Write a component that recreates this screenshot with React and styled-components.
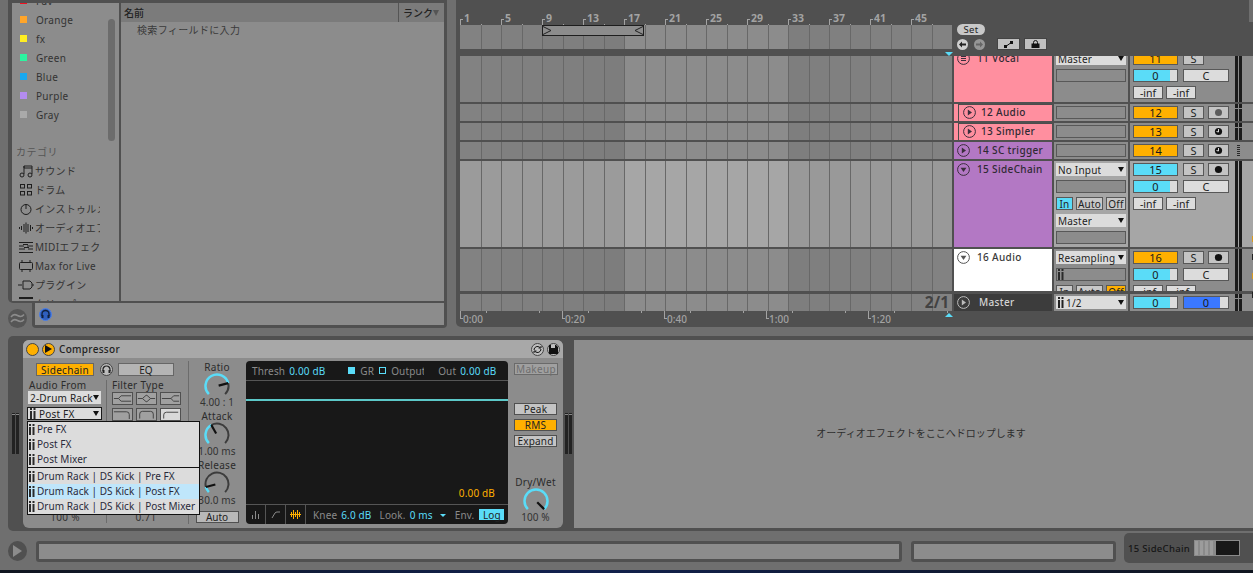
import React from "react";
import styled, { createGlobalStyle } from "styled-components";

const C = {
  bg: "#6f6f6f", frame: "#505050", panel: "#8c8c8c", sel: "#a6a6a6", light: "#dcdcdc",
  orange: "#ffb000", cyan: "#5adcf8", ink: "#1c1c1c", line: "#666666",
};

const Global = createGlobalStyle`
  html, body { margin: 0; padding: 0; background: ${C.bg}; }
  * { box-sizing: border-box; }
  body { font-family: "Noto Sans", "Noto Sans CJK JP", sans-serif; font-size: 10px; color: ${C.ink}; }
`;

const Page = styled.div`width:1253px;height:573px;overflow:hidden;display:flex;flex-direction:column;`;
const Top = styled.div`display:flex;height:327px;padding-left:8px;gap:9px;`;

/* ---------- Browser ---------- */
const Browser = styled.div`width:439px;display:flex;flex-direction:column;`;
const BrowserMain = styled.div`height:303px;background:${C.frame};padding:3px 3px 2px 4px;display:grid;grid-template-columns:107px 323px;column-gap:2px;border-radius:0 0 0 5px;`;
const Sidebar = styled.div`background:${C.panel};overflow:hidden;position:relative;`;
const SideList = styled.div`margin-top:-12px;`;
const SideRow = styled.div`height:19px;display:flex;align-items:center;padding-left:${p => p.$pad || 8}px;width:88px;overflow:hidden;white-space:nowrap;font-size:10px;letter-spacing:.3px;color:#333;`;
const Swatch = styled.span`width:7px;height:7px;background:${p => p.$c};margin-right:9px;flex:none;`;
const IconSlot = styled.span`width:16px;height:14px;margin-right:1px;flex:none;display:flex;`;
const Heading = styled.div`height:19px;margin-top:18px;padding-left:4px;display:flex;align-items:center;color:#555;font-size:10px;letter-spacing:.5px;`;
const Thumb = styled.div`position:absolute;left:96px;top:16px;width:7px;height:122px;border-radius:4px;background:#6c6c6c;`;
const Results = styled.div`background:${C.panel};`;
const ResultHead = styled.div`height:19px;background:#7b7b7b;display:flex;align-items:center;justify-content:space-between;font-size:10px;font-weight:500;color:#222;`;
const NameCol = styled.span`padding-left:3px;`;
const RankCol = styled.span`width:46px;height:100%;border-left:1px solid #555;display:flex;align-items:center;padding-left:4px;gap:0;`;
const HeadTri = styled.span`width:0;height:0;border:3.5px solid transparent;border-top:6px solid #555;border-bottom:0;`;
const Placeholder = styled.div`padding:0 0 0 16px;color:#3a3a3a;font-size:10px;letter-spacing:.35px;line-height:17px;`;
const BrowserFoot = styled.div`flex:1;display:flex;`;
const WaveSlot = styled.div`width:24px;display:flex;align-items:flex-start;padding:6px 0 0 0;`;
const WaveCircle = styled.div`width:19px;height:19px;border-radius:50%;background:#565656;display:flex;align-items:center;justify-content:center;`;
const FootBar = styled.div`flex:1;background:${C.frame};padding:0 3px 3px 3px;border-radius:0 0 4px 4px;display:flex;`;
const FootInner = styled.div`flex:1;background:${C.panel};display:flex;align-items:center;padding-left:4px;`;

/* ---------- Arrangement ---------- */
const Arr = styled.div`flex:1;background:${C.frame};border-radius:0 0 0 5px;position:relative;padding-left:4px;display:flex;flex-direction:column;`;
const ArrTop = styled.div`display:grid;grid-template-columns:492px 1fr;height:49px;margin-bottom:7px;`;
const Ruler = styled.div`height:25px;display:grid;grid-template-columns:repeat(12,1fr);position:relative;`;
const Bar = styled.div`position:relative;height:25px;color:#a3a3a3;font-weight:700;font-size:10.5px;padding:12px 0 0 4px;line-height:13px;&::before{content:"";position:absolute;left:0;bottom:0;height:5px;border-left:1px solid #a3a3a3;border-top:1px solid #a3a3a3;width:2px;}&::after{content:"";position:absolute;left:50%;bottom:0;height:1px;width:1px;background:#a3a3a3;}`;
const OverWrap = styled.div`position:relative;height:24px;`;
const LaneGrid = styled.div`display:grid;grid-template-columns:repeat(24,1fr);height:100%;`;
const Lane = styled.div`background:${p => p.$c};border-left:1px solid #686868;&:first-child{border-left:0;}`;
const Brace = styled.div`position:absolute;left:82px;top:0;width:102px;height:11px;background:${C.panel};border:1px solid #1e1e1e;display:flex;justify-content:space-between;align-items:center;`;
const SetArea = styled.div`padding:24px 0 0 5px;display:flex;flex-direction:column;gap:3px;`;
const SetPill = styled.div`width:28px;height:11px;border-radius:6px;background:#c8c8c8;color:#222;font-size:9.5px;line-height:11px;text-align:center;letter-spacing:.3px;`;
const SetRow = styled.div`display:flex;align-items:center;height:12px;`;
const ArrowBtn = styled.div`width:11px;height:11px;border-radius:50%;background:${p => p.$on ? "#cfcfcf" : "#969696"};margin-right:6px;display:flex;align-items:center;justify-content:center;`;
const SmallBtn = styled.div`width:23px;height:12px;background:#c0c0c0;border:1px solid #444;margin-left:${p => p.$ml || 0}px;display:flex;align-items:center;justify-content:center;`;

const TrackClip = styled.div`height:235px;overflow:hidden;margin-bottom:3px;`;
const Row = styled.div`display:grid;grid-template-columns:492px 98px 74px 123px;column-gap:2px;height:${p => p.$h}px;margin-top:${p => p.$mt || 0}px;margin-bottom:2px;overflow:hidden;`;
const Head = styled.div`background:${p => p.$bg};position:relative;display:flex;align-items:flex-start;padding:${p => p.$pt ?? 2}px 0 0 ${p => p.$pl}px;color:${p => p.$fg || "#2f2a33"};font-size:10px;font-weight:500;letter-spacing:.35px;line-height:13px;`;
const Nested = styled.div`position:absolute;left:4px;top:0;right:0;bottom:0;border-left:1px solid #4c4c4c;border-top:1px solid #4c4c4c;`;
const HeadName = styled.span`position:relative;margin-left:${p => p.$ml}px;white-space:nowrap;`;
const FoldSlot = styled.span`position:relative;width:13px;height:13px;flex:none;`;
const IOCol = styled.div`background:${p => p.$bg || C.panel};padding:${p => p.$pt ?? 2}px 2px 0 2px;display:flex;flex-direction:column;gap:4px;`;
const Sel = styled.div`height:13px;flex:none;background:${C.light};color:#222;display:flex;align-items:center;padding:0 2px;justify-content:space-between;font-size:10px;letter-spacing:.2px;white-space:nowrap;border:${p => p.$framed ? "1px solid #1a1a1a" : "0"};`;
const SelLabel = styled.span`display:flex;align-items:center;gap:2px;overflow:hidden;`;
const SelInset = styled.span`margin-left:1px;`;
const SelTri = styled.span`flex:none;width:0;height:0;border:3.5px solid transparent;border-top:5px solid #111;border-bottom:0;`;
const Field = styled.div`height:13px;flex:none;background:#8c8c8c;border:1px solid #585858;display:flex;align-items:center;padding-left:1px;`;
const MonRow = styled.div`display:flex;gap:3px;height:13px;flex:none;`;
const Mon = styled.div`width:${p => p.$w}px;background:${p => p.$on || "#c8c8c8"};border:1px solid #585858;display:flex;align-items:center;justify-content:center;font-size:10px;letter-spacing:.2px;color:#222;`;
const MixCol = styled.div`background:${p => p.$bg || C.panel};display:flex;padding-left:3px;position:relative;`;
const MixRows = styled.div`width:96px;padding-top:${p => p.$pt ?? 2}px;display:flex;flex-direction:column;gap:4px;`;
const MixLine = styled.div`display:flex;height:13px;flex:none;`;
const Activator = styled.div`width:45px;background:${p => p.$c};border:1px solid #585858;display:flex;align-items:center;justify-content:center;font-size:11px;color:#1a1a1a;`;
const Slider = styled.div`width:${p => p.$w || 45}px;margin-left:${p => p.$ml || 0}px;border:1px solid #585858;display:flex;align-items:center;justify-content:center;font-size:11px;color:#1a1a1a;background:linear-gradient(90deg,${p => p.$c} ${p => p.$f}%,${C.light} ${p => p.$f}%);`;
const Tog = styled.div`width:21px;margin-left:${p => p.$ml}px;background:#c4c4c4;border:1px solid #585858;display:flex;align-items:center;justify-content:center;font-size:11px;color:#222;`;
const Pan = styled.div`width:46px;margin-left:5px;background:${C.light};border:1px solid #585858;display:flex;align-items:center;justify-content:center;font-size:11px;color:#222;`;
const Peak = styled.div`width:30px;margin-right:3px;background:${C.light};border:1px solid #585858;display:flex;align-items:center;justify-content:center;font-size:10.5px;color:#222;`;
const Meter = styled.div`margin:${p => p.$short ? "1px" : "0"} 0 0 ${p => p.$ml ?? 6}px;width:8px;display:flex;gap:1px;`;
const MeterStrip = styled.div`width:3px;display:flex;flex-direction:column;gap:1px;`;
const Seg = styled.div`background:#1b1b1b;flex:${p => p.$f};`;
const Dots = styled.div`margin:3px 0 3px 8px;width:3px;background:repeating-linear-gradient(180deg,#2a2a2a 0 1px,transparent 1px 2px);`;

const TimeRuler = styled.div`height:16px;display:grid;grid-template-columns:repeat(5,102px);position:relative;`;
const TimeCell = styled.div`position:relative;color:#a3a3a3;font-size:10px;font-weight:500;padding:1px 0 0 3px;line-height:14px;&::before{content:"";position:absolute;left:0;top:0;height:7px;border-left:1px solid #a3a3a3;border-bottom:1px solid #a3a3a3;width:2px;}&::after{content:"";position:absolute;left:25%;top:0;height:2px;width:51%;border-left:1px solid #a3a3a3;border-right:1px solid #a3a3a3;}`;
const MasterRow = styled(Row)`margin-bottom:0;`;
const MasterLaneWrap = styled.div`position:relative;`;
const Sig = styled.div`position:absolute;right:3px;top:0;height:17px;font-size:15.5px;font-weight:700;color:#424242;line-height:17px;`;
const TriMark = styled.div`position:absolute;left:489px;top:${p => p.$top}px;width:0;height:0;border:4px solid transparent;${p => p.$up ? `border-bottom:4px solid ${C.cyan};border-top:0;` : `border-top:4px solid ${C.cyan};border-bottom:0;`}`;
const ScrollEdge = styled.div`position:absolute;right:0;top:0;width:4px;height:22px;background:#6e6e6e;`;
const EdgeDot = styled.div`position:absolute;right:0;top:${p => p.$top}px;width:1px;height:6px;background:${p => p.$c};`;

/* ---------- Device strip ---------- */
const DeviceStrip = styled.div`margin:9px 0 0 8px;height:195px;background:${C.frame};border-radius:5px 0 0 5px;padding:4px 0 3px 0;display:flex;`;
const Grip = styled.div`width:${p => p.$w}px;display:flex;padding-left:${p => p.$pl}px;align-items:center;`;
const GripBars = styled.div`width:7px;height:41px;display:flex;gap:1px;margin-top:${p => p.$mt || 0}px;`;
const GripBar = styled.div`width:3px;background:linear-gradient(180deg,#222 0 1px,#888 1px 2px,#222 2px);`;
const Device = styled.div`width:540px;background:${C.panel};border-radius:6px 6px 6px 6px;overflow:visible;display:flex;flex-direction:column;`;
const DevTitle = styled.div`height:18px;background:#a8a8a8;border-radius:6px 6px 0 0;display:flex;align-items:center;padding:0 3px 0 3px;`;
const DevName = styled.span`font-size:10px;font-weight:500;letter-spacing:.3px;color:#222;margin-left:4px;flex:1;`;
const TitleDot = styled.span`width:13px;height:13px;border-radius:50%;background:${p => p.$c};border:1px solid #444;margin-right:${p => p.$mr || 0}px;display:flex;align-items:center;justify-content:center;`;
const DevBody = styled.div`flex:1;display:flex;min-height:0;`;
const SideChain = styled.div`width:165px;position:relative;display:flex;flex-direction:column;padding-top:5px;`;
const ScTop = styled.div`display:flex;align-items:center;padding-left:13px;height:13px;`;
const ScBtn = styled.div`width:58px;height:13px;background:${C.orange};border:1px solid #666;display:flex;align-items:center;justify-content:center;font-size:10px;letter-spacing:.3px;color:#222;`;
const Phones = styled.div`width:13px;height:13px;margin-left:6px;border-radius:50%;background:#bcbcbc;border:1px solid #444;display:flex;align-items:center;justify-content:center;`;
const EqBtn = styled.div`width:56px;height:13px;margin-left:5px;background:#b4b4b4;border:1px solid #666;display:flex;align-items:center;justify-content:center;font-size:10px;color:#222;`;
const ScCols = styled.div`flex:1;display:grid;grid-template-columns:83px 82px;padding:4px 0 5px;`;
const ScCol = styled.div`display:flex;flex-direction:column;padding-left:${p => p.$pl}px;border-left:${p => p.$sep ? "1px solid #6c6c6c" : "0"};`;
const ScLabel = styled.div`font-size:10px;letter-spacing:.3px;color:#2b2b2b;line-height:11px;height:11px;white-space:nowrap;`;
const ScSel = styled(Sel)`width:${p => p.$w}px;margin:${p => p.$m};`;
const ScValue = styled.div`margin-top:auto;text-align:center;width:${p => p.$w}px;font-size:10px;letter-spacing:.3px;color:#333;line-height:11px;`;
const FilterGrid = styled.div`display:grid;grid-template-columns:repeat(3,21px);column-gap:3px;row-gap:3px;margin-top:1px;`;
const FilterBtn = styled.div`height:13px;background:${p => p.$on ? "#d8d8d8" : "#a0a0a0"};border:1px solid #505050;display:flex;`;
const Menu = styled.div`position:absolute;left:4px;top:63px;width:173px;height:94px;background:${C.light};border:1px solid #111;z-index:5;`;
const MenuSep = styled.div`height:1px;background:#111;margin-bottom:1px;`;
const MenuItem = styled.div`height:15px;display:flex;align-items:center;padding:0 0 1px 1px;gap:2px;font-size:10px;letter-spacing:.04px;white-space:nowrap;color:#2a2a3a;background:${p => p.$hi ? "#bfe6fb" : "transparent"};`;
const KnobCol = styled.div`width:58px;position:relative;display:flex;flex-direction:column;align-items:center;padding:4px 0 0 0;gap:2px;&::before{content:"";position:absolute;left:0;top:3px;bottom:4px;width:1px;background:#6c6c6c;}`;
const KnobUnit = styled.div`display:flex;flex-direction:column;align-items:center;height:47px;`;
const KLabel = styled.div`font-size:10px;letter-spacing:.3px;line-height:11px;height:11px;color:#2b2b2b;white-space:nowrap;`;
const KValue = styled.div`font-size:10px;letter-spacing:.1px;line-height:11px;margin-top:-2px;color:#333;white-space:nowrap;`;
const AutoBtn = styled.div`width:43px;height:12px;margin-top:2px;background:#b8b8b8;border:1px solid #505050;display:flex;align-items:center;justify-content:center;font-size:10px;color:#222;`;
const Display = styled.div`width:262px;height:163px;margin-top:3px;background:#181818;border-radius:4px;display:flex;flex-direction:column;color:#8a8a8a;font-size:10px;letter-spacing:.15px;`;
const DHead = styled.div`height:20px;border-bottom:1px solid #555;display:flex;align-items:center;padding-left:6px;white-space:nowrap;`;
const CyanVal = styled.span`color:${C.cyan};margin-left:${p => p.$ml ?? 4}px;`;
const Gap = styled.span`margin-left:${p => p.$ml}px;display:flex;align-items:center;`;
const Check = styled.span`width:7px;height:7px;border:1px solid ${C.cyan};background:${p => p.$on ? C.cyan : "transparent"};margin-right:5px;display:inline-block;`;
const ClipOut = styled.span`width:33px;overflow:hidden;display:inline-block;`;
const Plot = styled.div`flex:1;display:flex;flex-direction:column;min-height:0;`;
const Teal = styled.div`height:2px;margin-top:18px;background:#5cc8c8;`;
const GrVal = styled.div`margin:auto 13px 4px auto;color:${C.orange};`;
const DFoot = styled.div`height:20px;border-top:1px solid #555;display:flex;align-items:center;white-space:nowrap;`;
const FootCell = styled.div`width:20px;height:100%;border-right:1px solid #555;display:flex;align-items:center;justify-content:center;`;
const LogBtn = styled.span`width:25px;height:11px;margin-left:5px;background:${C.cyan};color:#222;display:flex;align-items:center;justify-content:center;`;
const SmallTri = styled.span`width:0;height:0;border:3px solid transparent;border-top:3px solid ${C.cyan};border-bottom:0;margin:2px 0 0 7px;`;
const RightCol = styled.div`flex:1;display:flex;flex-direction:column;padding:5px 0 5px 6px;`;
const Makeup = styled.div`width:44px;height:12px;background:#a0a0a0;border:1px solid #6a6a6a;display:flex;align-items:center;justify-content:center;font-size:10px;letter-spacing:.3px;color:#6e6e6e;`;
const ModeStack = styled.div`margin-top:28px;display:flex;flex-direction:column;gap:4px;`;
const ModeBtn = styled.div`width:43px;height:12px;background:${p => p.$on ? C.orange : "#c4c4c4"};border:1px solid #505050;display:flex;align-items:center;justify-content:center;font-size:10px;letter-spacing:.2px;color:#222;`;
const WetUnit = styled.div`margin-top:auto;width:43px;display:flex;flex-direction:column;align-items:center;`;
const Drop = styled.div`flex:1;background:${C.panel};display:flex;align-items:center;justify-content:center;padding:0 0 4px 15px;color:#2e2e2e;font-size:10px;letter-spacing:0;`;

/* ---------- Footer ---------- */
const Footer = styled.div`height:39px;display:flex;align-items:flex-start;padding-left:8px;`;
const PlayRound = styled.div`width:19px;height:20px;margin-top:10px;border-radius:50%;background:#505050;display:flex;align-items:center;justify-content:center;`;
const Status = styled.div`width:${p => p.$w}px;height:21px;margin:10px 0 0 ${p => p.$ml}px;background:${C.panel};border:3px solid #505050;border-radius:3px;`;
const Tab = styled.div`width:129px;height:30px;margin:2px 0 0 8px;background:#505050;border-radius:5px 0 0 5px;display:flex;align-items:center;padding-left:4px;color:#161616;font-size:9.5px;font-weight:500;letter-spacing:.3px;white-space:nowrap;`;
const Thumbnail = styled.div`width:46px;height:16px;margin-left:4px;background:#8a8a8a;display:flex;padding:1px;flex:none;`;
const ThumbSide = styled.div`width:19px;background:repeating-linear-gradient(90deg,#9c9c9c 0 3px,#8a8a8a 3px 5px);`;
const ThumbDisp = styled.div`flex:1;margin-left:2px;background:#181818;`;
const Taskbar = styled.div`height:3px;flex:none;background:linear-gradient(90deg,#10151f,#11214e 45%,#10151f);`;

/* ---------- Drawings ---------- */
const Ico = ({ children, w = 16, h = 14 }) => <svg width={w} height={h} viewBox={`0 0 ${w} ${h}`} fill="none" stroke="#1e1e1e" strokeWidth="1">{children}</svg>;
const icons = {
  note: <Ico><path d="M6 10V2h8v8M6 2v2h8" /><circle cx="4" cy="11" r="2" /><circle cx="12" cy="11" r="2" /></Ico>,
  drum: <Ico><rect x="2.5" y="1.5" width="4" height="3.5" /><rect x="9.5" y="1.5" width="4" height="3.5" /><rect x="2.5" y="8.5" width="4" height="3.5" /><rect x="9.5" y="8.5" width="4" height="3.5" /></Ico>,
  power: <Ico><circle cx="8" cy="7.5" r="5" /><path d="M8 2v5" /></Ico>,
  wave: <Ico><path d="M1.5 6v2M3.5 5v4M6 3v8M8 1.5v11M10 3v8M12.5 4v6M14.5 6v2" /></Ico>,
  midi: <Ico><path d="M1 2.5h14M1 12.5h14M1 6h5M9 6h6M1 9h6M10 9h5M5 4.5h5M6 7.5h5" /></Ico>,
  max: <Ico><rect x="1.5" y="3.5" width="13" height="7" rx="1" /><path d="M4 1v2.5M12 1v2.5M4 10.5V13M12 10.5V13" /></Ico>,
  plug: <Ico><path d="M0 7h4M5 3h7l2 2v4l-2 2H5zM14 7h2" /></Ico>,
  box: <Ico><path d="M1 1h14" strokeWidth="2" /></Ico>,
};
const Fold = ({ kind, c = "#3a2f3c" }) => (
  <svg width="13" height="13" viewBox="0 0 13 13" fill="none">
    <circle cx="6.5" cy="6.5" r="5.9" stroke={c} strokeWidth="1" />
    {kind === "right" && <path d="M4.8 3.6 9 6.5 4.8 9.4z" fill={c} />}
    {kind === "down" && <path d="M3.6 4.8h5.8L6.5 9z" fill={c} />}
    {kind === "lines" && <path d="M4 4.5h5M4 6.5h5M4 8.5h5" stroke={c} />}
  </svg>
);
const IISvg = styled.svg`flex:none;`;
const II = ({ c = "#2a2a2a", h = 11 }) => (
  <IISvg width="6" height={h} viewBox={`0 0 6 ${h}`}>
    <rect x="0" y="0" width="2" height="2" fill={c} /><rect x="0" y="3" width="2" height={h - 3} fill={c} />
    <rect x="3.5" y="0" width="2" height="2" fill={c} /><rect x="3.5" y="3" width="2" height={h - 3} fill={c} />
  </IISvg>
);
const Arm = ({ kind }) => (
  <svg width="11" height="11" viewBox="0 0 11 11">
    {kind === "off" && <circle cx="5.5" cy="5.5" r="3.5" fill="#5c5c5c" />}
    {kind === "on" && <circle cx="5.5" cy="5.5" r="3.6" fill="#111" />}
    {kind === "midi" && <><circle cx="5.5" cy="5.5" r="3.6" fill="#111" /><path d="M5.5 3v3L3.5 5.5" stroke="#ddd" strokeWidth="1" fill="none" /></>}
  </svg>
);
const KnobSvg = styled.svg`flex:none;`;
const Knob = ({ frac }) => {
  const cx = 13, cy = 13, r = 11.5;
  const pt = a => { const t = (a - 90) * Math.PI / 180; return [cx + r * Math.cos(t), cy + r * Math.sin(t)]; };
  const a0 = -135, a1 = 135, av = a0 + frac * 270;
  const arc = (s, e) => { const [x0, y0] = pt(s), [x1, y1] = pt(e); return `M${x0} ${y0}A${r} ${r} 0 ${e - s > 180 ? 1 : 0} 1 ${x1} ${y1}`; };
  const [nx, ny] = pt(av);
  return (
    <KnobSvg width="26" height="26" viewBox="0 0 26 26" fill="none">
      {frac < 1 && <path d={arc(av, a1)} stroke="#3c3c3c" strokeWidth="2" />}
      <path d={arc(a0, av)} stroke={C.cyan} strokeWidth="2.5" />
      <path d={`M${cx + (nx - cx) * 0.15} ${cy + (ny - cy) * 0.15}L${nx} ${ny}`} stroke="#111" strokeWidth="2.2" />
    </KnobSvg>
  );
};
const PhonesIcon = ({ c = "#222" }) => (
  <svg width="9" height="9" viewBox="0 0 9 9" fill="none"><path d="M1 6V4.5a3.5 3.5 0 0 1 7 0V6" stroke={c} strokeWidth="1.2" /><rect x=".5" y="5" width="2" height="3" fill={c} /><rect x="6.5" y="5" width="2" height="3" fill={c} /></svg>
);
const filterPaths = [
  "M1 5.5h5l3-3h11M6 5.5l3 3h11", "M1 5.5h5l4-3.5h1l4 3.5h5M6 5.5l4 3.5h1l4-3.5", "M1 5.5h10l3-3h6M11 5.5l3 3h6",
  "M1 2.5h14q3 0 3 3v5", "M3 10V5q0-3 3-3h9q3 0 3 3v5", "M3 10V6q0-3 3-3h13",
];
const FilterIcon = ({ d }) => <svg width="19" height="11" viewBox="0 0 21 11" fill="none"><path d={d} stroke="#3c3c3c" strokeWidth="1" /></svg>;

/* ---------- Data ---------- */
const shade = ["#828282", "#818181", "#808080", "#808080", "#7f7f7f", "#7f7f7f", "#7e7e7e", "#7d7d7d",
  "#8c8c8c", "#8c8c8c", "#8c8c8c", "#8c8c8c", "#8c8c8c", "#8c8c8c", "#8c8c8c", "#8c8c8c",
  "#7e7e7e", "#7f7f7f", "#808080", "#808080", "#818181", "#818181", "#818181", "#828282"];
const shadeSel = shade.map((c, i) => (i >= 8 && i < 16 ? "#a6a6a6" : i < 8 ? "#9b9b9b" : "#999999"));

const Lanes = ({ sel }) => <LaneGrid>{(sel ? shadeSel : shade).map((c, i) => <Lane key={i} $c={c} />)}</LaneGrid>;

const colors = [["Fav", "#f01020"], ["Orange", "#ffa52a"], ["fx", "#ffee22"], ["Green", "#2cf5a0"], ["Blue", "#18a8f0"], ["Purple", "#b48cf0"], ["Gray", "#aaaaaa"]];
const cats = [["note", "サウンド"], ["drum", "ドラム"], ["power", "インストゥルメント"], ["wave", "オーディオエフェクト"], ["midi", "MIDIエフェクト"], ["max", "Max for Live"], ["plug", "プラグイン"], ["box", "クリップ"]];

const MeterFull = ({ split }) => (
  <Meter>
    <MeterStrip>{split && <Seg $f={1} />}<Seg $f={split ? 3 : 1} /></MeterStrip>
    <MeterStrip>{split && <Seg $f={1} />}<Seg $f={split ? 3 : 1} /></MeterStrip>
  </Meter>
);

const SmallTrack = ({ num, name, bg, nested, arm, split }) => (
  <Row $h={17}>
    <Lanes />
    <Head $bg={bg} $pl={nested ? 9 : 3} $pt={2}>
      {nested && <Nested />}
      <FoldSlot><Fold kind="right" /></FoldSlot>
      <HeadName $ml={nested ? 5 : 7}>{num} {name}</HeadName>
    </Head>
    <IOCol $pt={2}><Field /></IOCol>
    <MixCol>
      <MixRows $pt={2}>
        <MixLine>
          <Activator $c={C.orange}>{num}</Activator>
          <Tog $ml={5}>S</Tog>
          <Tog $ml={4}><Arm kind={arm} /></Tog>
        </MixLine>
      </MixRows>
      {split ? <MeterFull split /> : <Dots />}
    </MixCol>
  </Row>
);

const Monitor = ({ active }) => (
  <MonRow>
    <Mon $w={17} $on={active === "in" ? C.cyan : undefined}>In</Mon>
    <Mon $w={27}>Auto</Mon>
    <Mon $w={20} $on={active === "off" ? C.orange : undefined}>Off</Mon>
  </MonRow>
);

const VolRow = () => (
  <MixLine><Slider $c={C.cyan} $f={84}>0</Slider><Pan>C</Pan></MixLine>
);
const PeakRow = () => (
  <MixLine><Peak>-inf</Peak><Peak>-inf</Peak></MixLine>
);

export default function App() {
  return (
    <Page>
      <Global />
      <Top>
        <Browser>
          <BrowserMain>
            <Sidebar>
              <SideList>
                {colors.map(([n, c]) => <SideRow key={n}><Swatch $c={c} />{n}</SideRow>)}
                <Heading>カテゴリ</Heading>
                {cats.map(([ic, n]) => <SideRow key={ic} $pad={6}><IconSlot>{icons[ic]}</IconSlot>{n}</SideRow>)}
              </SideList>
              <Thumb />
            </Sidebar>
            <Results>
              <ResultHead><NameCol>名前</NameCol><RankCol>ランク<HeadTri /></RankCol></ResultHead>
              <Placeholder>検索フィールドに入力</Placeholder>
            </Results>
          </BrowserMain>
          <BrowserFoot>
            <WaveSlot>
              <WaveCircle>
                <svg width="15" height="11" viewBox="0 0 15 11" fill="none" stroke="#8c8c8c" strokeWidth="1.5"><path d="M1 4c2-3 4-3 6.500-1.500S12 4 14 1.500M1 9c2-3 4-3 6.500-1.500S12 9 14 6.500" /></svg>
              </WaveCircle>
            </WaveSlot>
            <FootBar>
              <FootInner>
                <svg width="13" height="13" viewBox="0 0 13 13" fill="none">
                  <circle cx="6.500" cy="6.500" r="6" fill="#2f5fbe" stroke="#4c7fe6" />
                  <path d="M3 8V6a3.500 3.500 0 0 1 7 0v2" stroke="#10203c" strokeWidth="1.300" />
                  <rect x="2.500" y="7" width="2" height="3" fill="#10203c" /><rect x="8.500" y="7" width="2" height="3" fill="#10203c" />
                </svg>
              </FootInner>
            </FootBar>
          </BrowserFoot>
        </Browser>

        <Arr>
          <ArrTop>
            <div>
              <Ruler>{[1, 5, 9, 13, 17, 21, 25, 29, 33, 37, 41, 45].map(n => <Bar key={n}>{n}</Bar>)}</Ruler>
              <OverWrap>
                <Lanes />
                <Brace>
                  <svg width="10" height="9" viewBox="0 0 10 9" fill="none"><path d="M0 .5 8 4.500 0 8.500" stroke="#222" /></svg>
                  <svg width="10" height="9" viewBox="0 0 10 9" fill="none"><path d="M10 .5 2 4.500 10 8.500" stroke="#222" /></svg>
                </Brace>
              </OverWrap>
            </div>
            <SetArea>
              <SetPill>Set</SetPill>
              <SetRow>
                <ArrowBtn $on><svg width="7" height="7" viewBox="0 0 7 7"><path d="M0 3.500 3 .5v2h4v2H3v2z" fill="#222" /></svg></ArrowBtn>
                <ArrowBtn><svg width="7" height="7" viewBox="0 0 7 7"><path d="M7 3.500 4 .5v2H0v2h4v2z" fill="#666" /></svg></ArrowBtn>
                <SmallBtn $ml={6}><svg width="9" height="7" viewBox="0 0 9 7"><path d="M1 6 8 1" stroke="#111" strokeWidth="1" /><rect x="0" y="4" width="3" height="3" fill="#111" /><rect x="6" y="0" width="3" height="3" fill="#111" /></svg></SmallBtn>
                <SmallBtn $ml={4}><svg width="9" height="8" viewBox="0 0 9 8" fill="none"><path d="M2.500 4V2.500a2 2 0 0 1 4 0V4" stroke="#111" /><rect x=".5" y="3.500" width="8" height="4.500" fill="#111" /></svg></SmallBtn>
              </SetRow>
            </SetArea>
          </ArrTop>

          <TrackClip>
            <Row $h={52} $mt={-6}>
              <Lanes />
              <Head $bg="#ff8f9f" $pl={3} $pt={2}>
                <FoldSlot><Fold kind="lines" /></FoldSlot>
                <HeadName $ml={7}>11 Vocal</HeadName>
              </Head>
              <IOCol>
                <Sel><SelLabel>Master</SelLabel><SelTri /></Sel>
                <Field />
              </IOCol>
              <MixCol>
                <MixRows>
                  <MixLine>
                    <Activator $c={C.orange}>11</Activator>
                    <Tog $ml={5}>S</Tog>
                  </MixLine>
                  <VolRow />
                  <PeakRow />
                </MixRows>
                <MeterFull />
              </MixCol>
            </Row>
            <SmallTrack num={12} name="Audio" bg="#ff8f9f" nested arm="off" split />
            <SmallTrack num={13} name="Simpler" bg="#ff8f9f" nested arm="midi" split />
            <SmallTrack num={14} name="SC trigger" bg="#b378c4" arm="midi" />
            <Row $h={86}>
              <Lanes sel />
              <Head $bg="#b378c4" $pl={3} $pt={2}>
                <FoldSlot><Fold kind="down" /></FoldSlot>
                <HeadName $ml={7}>15 SideChain</HeadName>
              </Head>
              <IOCol $bg={C.sel}>
                <Sel><SelLabel>No Input</SelLabel><SelTri /></Sel>
                <Field />
                <Monitor active="in" />
                <Sel><SelLabel>Master</SelLabel><SelTri /></Sel>
                <Field />
              </IOCol>
              <MixCol $bg={C.sel}>
                <MixRows>
                  <MixLine>
                    <Activator $c={C.cyan}>15</Activator>
                    <Tog $ml={5}>S</Tog>
                    <Tog $ml={4}><Arm kind="on" /></Tog>
                  </MixLine>
                  <VolRow />
                  <PeakRow />
                </MixRows>
                <MeterFull />
              </MixCol>
            </Row>
            <Row $h={88}>
              <Lanes />
              <Head $bg="#ffffff" $pl={3} $pt={2} $fg="#3a3a3a">
                <FoldSlot><Fold kind="down" c="#555" /></FoldSlot>
                <HeadName $ml={7}>16 Audio</HeadName>
              </Head>
              <IOCol>
                <Sel><SelLabel>Resampling</SelLabel><SelTri /></Sel>
                <Field><II /></Field>
                <Monitor active="off" />
              </IOCol>
              <MixCol>
                <MixRows>
                  <MixLine>
                    <Activator $c={C.orange}>16</Activator>
                    <Tog $ml={5}>S</Tog>
                    <Tog $ml={4}><Arm kind="on" /></Tog>
                  </MixLine>
                  <VolRow />
                  <PeakRow />
                </MixRows>
                <MeterFull />
              </MixCol>
            </Row>
          </TrackClip>

          <MasterRow $h={17}>
            <MasterLaneWrap><Lanes /><Sig>2/1</Sig></MasterLaneWrap>
            <Head $bg="#3c3c3c" $pl={3} $pt={2} $fg="#d4d4d4">
              <FoldSlot><Fold kind="right" c="#bdbdbd" /></FoldSlot>
              <HeadName $ml={9}>Master</HeadName>
            </Head>
            <IOCol $pt={2}>
              <Sel><SelLabel><II c="#222" /><span>1/2</span></SelLabel><SelTri /></Sel>
            </IOCol>
            <MixCol>
              <MixRows $pt={2}>
                <MixLine>
                  <Slider $c={C.cyan} $f={84}>0</Slider>
                  <Slider $c="#3b78ff" $f={82} $w={46} $ml={5}>0</Slider>
                </MixLine>
              </MixRows>
              <MeterFull split />
            </MixCol>
          </MasterRow>
          <TimeRuler>{["0:00", "0:20", "0:40", "1:00", "1:20"].map(t => <TimeCell key={t}>{t}</TimeCell>)}</TimeRuler>

          <TriMark $top={52} />
          <TriMark $top={313} $up />
          <ScrollEdge />
          <EdgeDot $top={236} $c="#d89a20" />
          <EdgeDot $top={254} $c="#222" />
          <EdgeDot $top={273} $c="#d89a20" />
          <EdgeDot $top={292} $c="#222" />
        </Arr>
      </Top>

      <DeviceStrip>
        <Grip $w={15} $pl={4}><GripBars $mt={-2}><GripBar /><GripBar /></GripBars></Grip>
        <Device>
          <DevTitle>
            <TitleDot $c={C.orange} $mr={3} />
            <TitleDot $c={C.orange}>
              <svg width="7" height="8" viewBox="0 0 7 8"><path d="M0 0 7 4 0 8z" fill="#111" /></svg>
            </TitleDot>
            <DevName>Compressor</DevName>
            <TitleDot $c="#c0c0c0" $mr={3}>
              <svg width="9" height="9" viewBox="0 0 9 9" fill="none" stroke="#111"><path d="M1 5a3.500 3.500 0 0 1 6-2.500M8 4a3.500 3.500 0 0 1-6 2.500" /><path d="M5.500 3h2.500V1M3.500 6H1v2" /></svg>
            </TitleDot>
            <TitleDot $c="#c0c0c0">
              <svg width="9" height="9" viewBox="0 0 9 9"><path d="M0 0h7l2 2v7H0z" fill="#111" /><rect x="2" y="0" width="4" height="3" fill="#c0c0c0" /></svg>
            </TitleDot>
          </DevTitle>
          <DevBody>
            <SideChain>
              <ScTop>
                <ScBtn>Sidechain</ScBtn>
                <Phones><PhonesIcon /></Phones>
                <EqBtn>EQ</EqBtn>
              </ScTop>
              <ScCols>
                <ScCol $pl={6}>
                  <ScLabel>Audio From</ScLabel>
                  <ScSel $w={73} $m="0 0 0 -1px"><SelLabel>2-Drum Rack</SelLabel><SelTri /></ScSel>
                  <ScSel $framed $w={75} $m="3px 0 0 -2px"><SelLabel><II /><SelInset>Post FX</SelInset></SelLabel><SelTri /></ScSel>
                  <ScValue $w={72}>100 %</ScValue>
                </ScCol>
                <ScCol $pl={5} $sep>
                  <ScLabel>Filter Type</ScLabel>
                  <FilterGrid>
                    {filterPaths.map((d, i) => <FilterBtn key={i} $on={i === 5}><FilterIcon d={d} /></FilterBtn>)}
                  </FilterGrid>
                  <ScValue $w={68}>0.71</ScValue>
                </ScCol>
              </ScCols>
              <Menu>
                {["Pre FX", "Post FX", "Post Mixer"].map(t => <MenuItem key={t}><II />{t}</MenuItem>)}
                <MenuSep />
                {["Pre FX", "Post FX", "Post Mixer"].map(t => (
                  <MenuItem key={t} $hi={t === "Post FX"}><II />Drum Rack | DS Kick | {t}</MenuItem>
                ))}
              </Menu>
            </SideChain>
            <KnobCol>
              <KnobUnit><KLabel>Ratio</KLabel><Knob frac={0.78} /><KValue>4.00 : 1</KValue></KnobUnit>
              <KnobUnit><KLabel>Attack</KLabel><Knob frac={0.39} /><KValue>1.00 ms</KValue></KnobUnit>
              <KnobUnit><KLabel>Release</KLabel><Knob frac={0.11} /><KValue>30.0 ms</KValue></KnobUnit>
              <AutoBtn>Auto</AutoBtn>
            </KnobCol>
            <Display>
              <DHead>
                Thresh<CyanVal>0.00 dB</CyanVal>
                <Gap $ml={23}><Check $on />GR</Gap>
                <Gap $ml={5}><Check /><ClipOut>Output</ClipOut></Gap>
                <Gap $ml={14}>Out</Gap><CyanVal $ml={4}>0.00 dB</CyanVal>
              </DHead>
              <Plot>
                <Teal />
                <GrVal>0.00 dB</GrVal>
              </Plot>
              <DFoot>
                <FootCell><svg width="9" height="8" viewBox="0 0 9 8" fill="#8a8a8a"><rect x="1" y="4" width="1" height="4" /><rect x="4" y="0" width="1" height="8" /><rect x="7" y="3" width="1" height="5" /></svg></FootCell>
                <FootCell><svg width="9" height="8" viewBox="0 0 9 8" fill="none" stroke="#8a8a8a"><path d="M1 7 4 2q1-1 2-1h3" /></svg></FootCell>
                <FootCell><svg width="11" height="9" viewBox="0 0 11 9" fill="none" stroke={C.orange}><path d="M0 4.500h11M1.500 2v5M3.500 0v9M5.500 2v5M7.500 0v9M9.500 2v5" /></svg></FootCell>
                <Gap $ml={7}>Knee</Gap><CyanVal>6.0 dB</CyanVal>
                <Gap $ml={8}>Look.</Gap><CyanVal>0 ms</CyanVal>
                <SmallTri />
                <Gap $ml={9}>Env.</Gap>
                <LogBtn>Log</LogBtn>
              </DFoot>
            </Display>
            <RightCol>
              <Makeup>Makeup</Makeup>
              <ModeStack>
                <ModeBtn>Peak</ModeBtn>
                <ModeBtn $on>RMS</ModeBtn>
                <ModeBtn>Expand</ModeBtn>
              </ModeStack>
              <WetUnit><KLabel>Dry/Wet</KLabel><Knob frac={1} /><KValue>100 %</KValue></WetUnit>
            </RightCol>
          </DevBody>
        </Device>
        <Grip $w={11} $pl={2}><GripBars $mt={-2}><GripBar /><GripBar /></GripBars></Grip>
        <Drop>オーディオエフェクトをここへドロップします</Drop>
      </DeviceStrip>

      <Footer>
        <PlayRound><svg width="9" height="12" viewBox="0 0 9 12"><path d="M0 0 9 6 0 12z" fill="#8c8c8c" /></svg></PlayRound>
        <Status $w={866} $ml={9} />
        <Status $w={205} $ml={9} />
        <Tab>15 SideChain<Thumbnail><ThumbSide /><ThumbDisp /></Thumbnail></Tab>
      </Footer>
      <Taskbar />
    </Page>
  );
}
